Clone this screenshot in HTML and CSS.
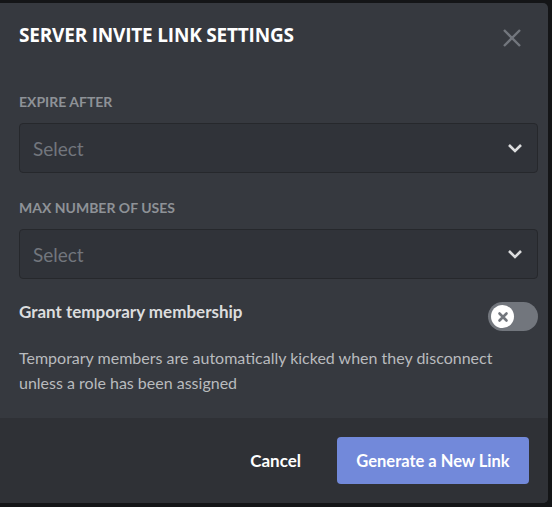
FILE: index.html
```html
<!DOCTYPE html>
<html>
<head>
<meta charset="utf-8">
<link rel="stylesheet" href="styles.css">
</head>
<body>
<div class="modal">
  <div class="content">
    <div class="header">
      <h2 class="title">Server Invite Link Settings</h2>
      <button class="close" aria-label="Close">
        <svg width="20" height="20" viewBox="0 0 20 20"><path d="M2 2L18 18M18 2L2 18" stroke="#72767d" stroke-width="2.4" fill="none"/></svg>
      </button>
    </div>
    <div class="field">
      <div class="label">Expire After</div>
      <div class="select">
        <span class="placeholder">Select</span>
        <svg class="chev" width="16" height="10" viewBox="0 0 16 10"><path d="M2 2L8 8L14 2" stroke="#dcddde" stroke-width="2.6" fill="none"/></svg>
      </div>
    </div>
    <div class="field">
      <div class="label">Max Number of Uses</div>
      <div class="select">
        <span class="placeholder">Select</span>
        <svg class="chev" width="16" height="10" viewBox="0 0 16 10"><path d="M2 2L8 8L14 2" stroke="#dcddde" stroke-width="2.6" fill="none"/></svg>
      </div>
    </div>
    <div class="switch-row">
      <div class="switch-title">Grant temporary membership</div>
      <div class="toggle">
        <div class="knob">
          <svg width="12" height="12" viewBox="0 0 12 12"><path d="M2.5 2.5L9.5 9.5M9.5 2.5L2.5 9.5" stroke="#72767d" stroke-width="2.6" stroke-linecap="round" fill="none"/></svg>
        </div>
      </div>
    </div>
    <p class="desc">Temporary members are automatically kicked when they disconnect unless a role has been assigned</p>
  </div>
  <div class="footer">
    <button class="cancel">Cancel</button>
    <button class="primary">Generate a New Link</button>
  </div>
</div>
</body>
</html>
```
FILE: styles.css
```css
* { box-sizing: border-box; }
html, body { margin: 0; padding: 0; }
body {
  background: #141517;
  width: 552px;
  height: 507px;
  overflow: hidden;
  font-family: "Lato", "Open Sans", sans-serif;
}
.modal {
  margin-top: 3px;
  width: 548px;
  height: 500px;
  background: #36393f;
  border-radius: 0 5px 5px 0;
  overflow: hidden;
  display: flex;
  flex-direction: column;
}
.content {
  flex: 1;
  padding: 0 10px 0 19px;
}
.header {
  display: flex;
  justify-content: space-between;
  align-items: flex-start;
  padding-top: 20px;
  height: 91px;
}
.title {
  margin: 0;
  font-family: "Open Sans", sans-serif;
  font-size: 19px;
  line-height: 24px;
  font-weight: 700;
  color: #ffffff;
  text-transform: uppercase;
  letter-spacing: -0.2px;
}
.close {
  background: none;
  border: 0;
  padding: 0;
  margin: 4px 15px 0 0;
  width: 22px;
  height: 22px;
  display: flex;
  align-items: center;
  justify-content: center;
}
.field { margin-bottom: 27px; }
.label {
  font-size: 14px;
  line-height: 16px;
  font-weight: 700;
  color: #8e9297;
  text-transform: uppercase;
  margin-bottom: 13px;
}
.select {
  height: 50px;
  background: #303339;
  border: 1px solid #26282c;
  border-radius: 4px;
  display: flex;
  align-items: center;
  justify-content: space-between;
  padding: 0 14px 0 13px;
}
.placeholder {
  font-size: 19px;
  color: #72767d;
  font-weight: 400;
}
.switch-row {
  display: flex;
  justify-content: space-between;
  align-items: flex-start;
  margin-top: -6px;
}
.switch-title {
  font-size: 17px;
  line-height: 24px;
  font-weight: 700;
  color: #dcddde;
}
.toggle {
  width: 50px;
  height: 29px;
  border-radius: 15px;
  background: #72767d;
  padding: 3px;
  margin-top: 2px;
}
.knob {
  width: 23px;
  height: 23px;
  border-radius: 50%;
  background: #ffffff;
  display: flex;
  align-items: center;
  justify-content: center;
}
.desc {
  margin: 14px 0 0 0;
  font-size: 16px;
  line-height: 25px;
  color: #b9bbbe;
}
.footer {
  height: 85px;
  background: #2f3136;
  display: flex;
  justify-content: flex-end;
  align-items: center;
  padding: 0 19px 0 0;
  gap: 36px;
}
.cancel {
  background: none;
  border: 0;
  color: #ffffff;
  font-family: inherit;
  font-size: 17px;
  font-weight: 700;
  padding: 0;
}
.primary {
  width: 192px;
  height: 47px;
  background: #7289da;
  color: #ffffff;
  border: 0;
  border-radius: 4px;
  font-family: inherit;
  font-size: 16.5px;
  font-weight: 700;
}
```
